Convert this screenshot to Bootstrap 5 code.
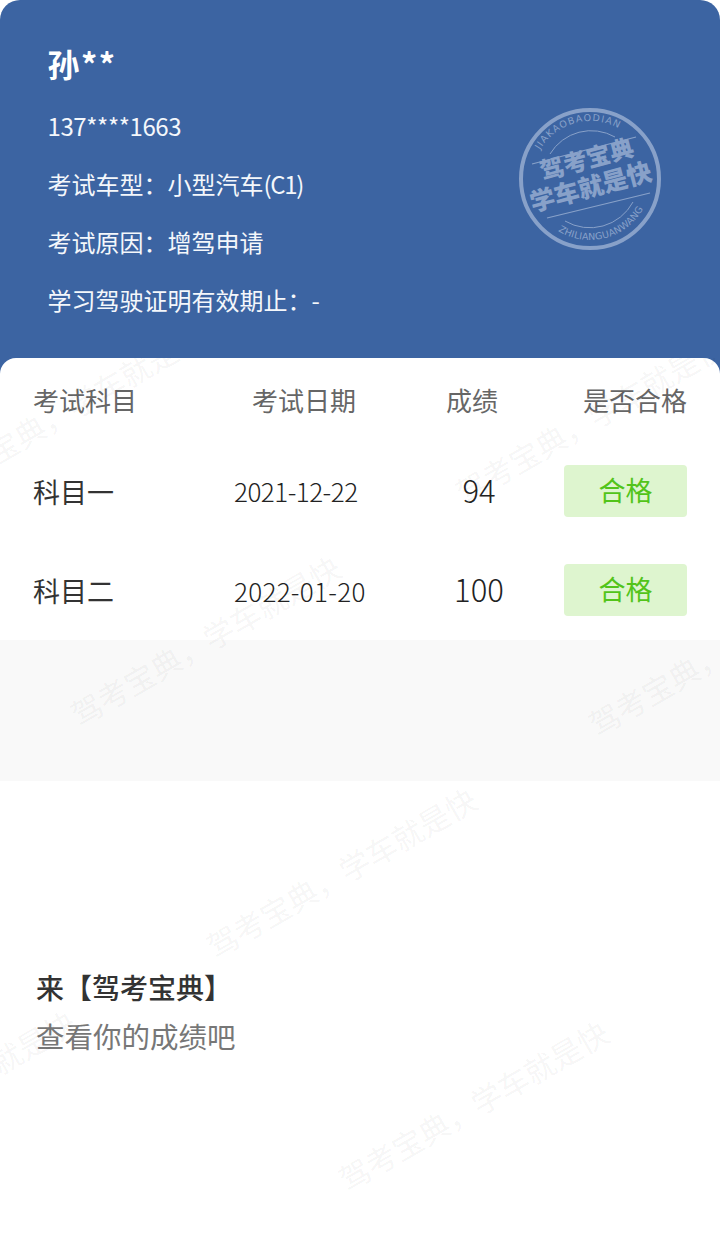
<!DOCTYPE html>
<html lang="zh-CN">
<head>
  <meta charset="UTF-8">
  <meta name="viewport" content="width=device-width, initial-scale=1">
  <title>成绩查询</title>
  <link href="https://cdn.jsdelivr.net/npm/bootstrap@5.3.3/dist/css/bootstrap.min.css" rel="stylesheet">
  <style>
    html, body {
      height: 100%;
    }
    body {
      font-family: "Noto Sans CJK SC", sans-serif;
      background-color: #fff;
      color: #333;
    }
    .page-wrap {
      width: 720px;
      height: 1242px;
      overflow: hidden;
    }
    .info-head {
      background-color: #3c64a2;
      border-radius: 20px 20px 0 0;
      padding: 34px 47.5px 48px;
      height: 378px;
      color: #f4f7fb;
    }
    .info-name {
      font-size: 32px;
      font-weight: 700;
      letter-spacing: 1.5px;
      line-height: 58px;
      margin-bottom: 5px;
      color: #fff;
    }
    .info-line {
      font-size: 24px;
      line-height: 58px;
      margin: 0;
    }
    .phone-num {
      letter-spacing: -.4px;
    }
    .car-code {
      letter-spacing: -1.3px;
    }
    .stamp {
      position: absolute;
      left: 515px;
      top: 104px;
      width: 150px;
      height: 150px;
    }
    .stamp-main {
      font-weight: 900;
      fill: #88a1c9;
    }
    .stamp-small {
      font-family: "DejaVu Sans", sans-serif;
      font-size: 9.5px;
      fill: #88a1c9;
    }
    .score-card {
      background-color: #fff;
      border-radius: 16px 16px 0 0;
      margin-top: -20px;
      position: relative;
      padding: 3px 33px 0;
    }
    .score-row {
      display: grid;
      grid-template-columns: 201px 190px 110px 1fr;
      align-items: center;
      height: 99.5px;
      font-size: 26px;
      color: #333;
    }
    .score-head {
      height: 80px;
      padding-bottom: 4px;
      color: #666;
    }
    .head-date {
      padding-left: 18px;
    }
    .head-score {
      padding-right: 14px;
    }
    .subject-cell {
      font-size: 27px;
      padding-top: 2px;
    }
    .date-cell {
      font-weight: 300;
      color: #222;
      letter-spacing: -.5px;
    }
    .date-wide {
      letter-spacing: .3px;
    }
    .num-cell {
      font-size: 31px;
      font-weight: 300;
      color: #222;
      padding-bottom: 2px;
    }
    .pass-tag {
      width: 123px;
      height: 52px;
      line-height: 50px;
      border-radius: 4px;
      font-size: 27px;
      background-color: #def5cf;
      color: #52c41a;
    }
    .gray-band {
      height: 141px;
      background-color: #f9f9f9;
    }
    .foot-text {
      padding: 182px 36px 0;
      font-size: 28.5px;
      line-height: 48px;
    }
    .foot-text .foot-title {
      font-size: 28px;
      font-weight: 500;
      color: #333;
      margin-bottom: 1px;
    }
    .foot-text .foot-sub {
      color: #777;
    }
    .wm-layer {
      position: absolute;
      left: 0;
      right: 0;
      top: 358px;
      bottom: 0;
      overflow: hidden;
      pointer-events: none;
    }
    .wm-text {
      position: absolute;
      width: 320px;
      margin-left: -160px;
      margin-top: -20px;
      line-height: 40px;
      text-align: center;
      white-space: nowrap;
      font-size: 30.5px;
      font-weight: 400;
      color: rgba(0, 0, 0, .05);
      transform: rotate(-30deg);
    }
    .wm-1 { left: 69px; top: 50px; }
    .wm-2 { left: 590px; top: 60px; }
    .wm-3 { left: 205px; top: 282px; }
    .wm-4 { left: 723px; top: 292px; }
    .wm-5 { left: 341px; top: 514px; }
    .wm-6 { left: -60px; top: 737px; }
    .wm-7 { left: 473px; top: 747px; }
  </style>
</head>
<body>

<div class="page-wrap position-relative">
  <header class="info-head position-relative">
    <div class="info-name">孙**</div>
    <p class="info-line phone-num">137****1663</p>
    <p class="info-line">考试车型：小型汽车<span class="car-code">(C1)</span></p>
    <p class="info-line">考试原因：增驾申请</p>
    <p class="info-line">学习驾驶证明有效期止：-</p>

    <svg class="stamp" viewBox="0 0 150 150" xmlns="http://www.w3.org/2000/svg">
      <defs>
        <path id="arcTop" d="M25 46 A58 58 0 0 1 103 24"/>
        <path id="arcBottom" d="M43 127 A61 61 0 0 0 128 105"/>
      </defs>
      <circle cx="75" cy="75" r="69" fill="none" stroke="#88a1c9" stroke-width="4"/>
      <path d="M17 60 L121 33" stroke="#88a1c9" stroke-width="1.2"/>
      <path d="M32 114 L135 89" stroke="#88a1c9" stroke-width="1.2"/>
      <path d="M35 50 A48 48 0 0 1 100 33" fill="none" stroke="#88a1c9" stroke-width="1"/>
      <path d="M50 117 A49 49 0 0 0 118 98" fill="none" stroke="#88a1c9" stroke-width="1"/>
      <text class="stamp-small"><textPath href="#arcTop" textLength="90">JIAKAOBAODIAN</textPath></text>
      <text class="stamp-small"><textPath href="#arcBottom" textLength="98">ZHILIANGUANWANG</textPath></text>
      <text class="stamp-main" x="72" y="64" font-size="24" text-anchor="middle" transform="rotate(-15 72 56)">驾考宝典</text>
      <text class="stamp-main" x="76" y="92" font-size="25" text-anchor="middle" transform="rotate(-15 76 84)">学车就是快</text>
    </svg>
  </header>

  <section class="score-card">
    <div class="score-row score-head">
      <div>考试科目</div>
      <div class="head-date">考试日期</div>
      <div class="head-score text-center">成绩</div>
      <div class="text-end">是否合格</div>
    </div>
    <div class="score-row">
      <div class="subject-cell">科目一</div>
      <div class="date-cell">2021-12-22</div>
      <div class="num-cell text-center">94</div>
      <div class="d-flex justify-content-end"><div class="pass-tag text-center">合格</div></div>
    </div>
    <div class="score-row">
      <div class="subject-cell">科目二</div>
      <div class="date-cell date-wide">2022-01-20</div>
      <div class="num-cell text-center">100</div>
      <div class="d-flex justify-content-end"><div class="pass-tag text-center">合格</div></div>
    </div>
  </section>

  <div class="gray-band"></div>

  <div class="foot-text">
    <div class="foot-title">来【驾考宝典】</div>
    <div class="foot-sub">查看你的成绩吧</div>
  </div>

  <div class="wm-layer">
    <div class="wm-text wm-1">驾考宝典，学车就是快</div>
    <div class="wm-text wm-2">驾考宝典，学车就是快</div>
    <div class="wm-text wm-3">驾考宝典，学车就是快</div>
    <div class="wm-text wm-4">驾考宝典，学车就是快</div>
    <div class="wm-text wm-5">驾考宝典，学车就是快</div>
    <div class="wm-text wm-6">驾考宝典，学车就是快</div>
    <div class="wm-text wm-7">驾考宝典，学车就是快</div>
  </div>
</div>

<script src="https://cdn.jsdelivr.net/npm/bootstrap@5.3.3/dist/js/bootstrap.bundle.min.js"></script>
</body>
</html>
